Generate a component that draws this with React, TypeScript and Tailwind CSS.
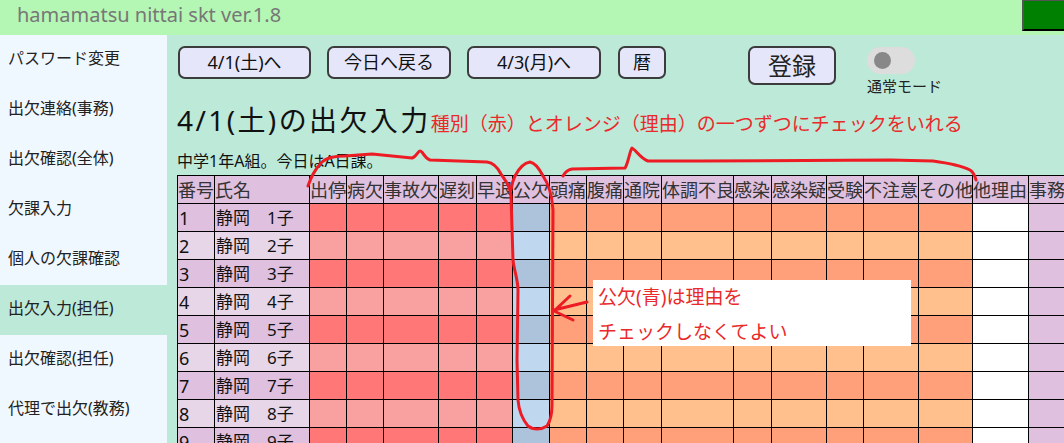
import React from "react";

type ColType = "id" | "red" | "blue" | "orange" | "white" | "jimu";

const cols: { name: string; w: number; type: ColType }[] = [
  { name: "番号", w: 37, type: "id" },
  { name: "氏名", w: 95, type: "id" },
  { name: "出停", w: 37, type: "red" },
  { name: "病欠", w: 37, type: "red" },
  { name: "事故欠", w: 55, type: "red" },
  { name: "遅刻", w: 38, type: "red" },
  { name: "早退", w: 36, type: "red" },
  { name: "公欠", w: 37, type: "blue" },
  { name: "頭痛", w: 37, type: "orange" },
  { name: "腹痛", w: 37, type: "orange" },
  { name: "通院", w: 38, type: "orange" },
  { name: "体調不良", w: 72, type: "orange" },
  { name: "感染", w: 38, type: "orange" },
  { name: "感染疑", w: 55, type: "orange" },
  { name: "受験", w: 37, type: "orange" },
  { name: "不注意", w: 55, type: "orange" },
  { name: "その他", w: 54, type: "orange" },
  { name: "他理由", w: 56, type: "white" },
  { name: "事務連絡", w: 80, type: "jimu" },
];

const bg: Record<ColType, [string, string]> = {
  id: ["bg-[#dfc0df]", "bg-[#e7d6e7]"],
  red: ["bg-[#ff7777]", "bg-[#f9a0a0]"],
  blue: ["bg-[#adc3dc]", "bg-[#c0d8ef]"],
  orange: ["bg-[#ffa07a]", "bg-[#ffc08e]"],
  white: ["bg-white", "bg-white"],
  jimu: ["bg-[#dfc0df]", "bg-[#dfc0df]"],
};

const menu = [
  "パスワード変更",
  "出欠連絡(事務)",
  "出欠確認(全体)",
  "欠課入力",
  "個人の欠課確認",
  "出欠入力(担任)",
  "出欠確認(担任)",
  "代理で出欠(教務)",
];

const btn =
  "h-[33px] rounded-[7px] border-2 border-[#3c3c3c] bg-[#e6e6fa] text-[18px] text-[#111] flex items-center justify-center";

export default function App() {
  const rows = Array.from({ length: 10 }, (_, i) => i + 1);
  return (
    <div className="relative w-[1064px] h-[443px] overflow-hidden flex flex-col [font-family:'Noto_Sans','Noto_Sans_CJK_JP',sans-serif] text-[#111]">
      {/* top bar */}
      <div className="h-[35px] shrink-0 bg-[#b4f6b4] flex items-start justify-between">
        <div className="pl-[17px] pt-[2px] text-[20px] leading-[26px] text-[#777]">
          hamamatsu nittai skt ver.1.8
        </div>
        <div className="w-[42px] h-[31px] bg-[#008000] border-l-2 border-t border-b-2 border-l-[#555] border-t-[#555] border-b-black" />
      </div>

      <div className="flex flex-1 min-h-0">
        {/* sidebar */}
        <div className="w-[167px] shrink-0 bg-[#f0f8ff] flex flex-col">
          {menu.map((m) => (
            <div
              key={m}
              className={
                "h-[50px] shrink-0 flex items-center pl-[8px] pb-[4px] text-[16px] text-[#222] " +
                (m === "出欠入力(担任)" ? "bg-[#bde9d9]" : "")
              }
            >
              {m}
            </div>
          ))}
        </div>

        {/* main */}
        <div className="flex-1 min-w-0 bg-[#bde9d9] overflow-hidden pl-[10px] pt-[11px]">
          <div className="h-[54px] flex items-start">
            <div className={btn + " w-[133px] ml-[1px]"}>4/1(土)へ</div>
            <div className={btn + " w-[124px] ml-[16px]"}>今日へ戻る</div>
            <div className={btn + " w-[134px] ml-[16px]"}>4/3(月)へ</div>
            <div className={btn + " w-[48px] ml-[17px] text-[17px]"}>暦</div>
            <div className="w-[88px] h-[39px] ml-[82px] rounded-[7px] border-2 border-[#3c3c3c] bg-[#e6e6fa] text-[24px] text-[#222] flex items-center justify-center">
              登録
            </div>
            <div className="ml-[31px] flex flex-col items-start pt-[1px]">
              <div className="w-[48px] h-[27px] rounded-full bg-[#dddddd] flex items-center pl-[7px]">
                <div className="w-[17px] h-[17px] rounded-full bg-[#888888]" />
              </div>
              <div className="text-[15px] leading-[20px] mt-[2px] text-[#222]">通常モード</div>
            </div>
          </div>

          <div className="h-[40px] leading-[40px] whitespace-nowrap">
            <span className="text-[28px] text-[#111] tracking-[2.4px]">4/1(土)の出欠入力</span>
            <span className="text-[19px] text-[#ea2a2a]">
              種別（赤）とオレンジ（理由）の一つずつにチェックをいれる
            </span>
          </div>
          <div className="mt-[11px] text-[16px] leading-[20px] text-[#111]">中学1年A組。今日はA日課。</div>

          <table className="mt-[4px] table-fixed border-collapse w-[931px] text-[18px]">
            <colgroup>
              {cols.map((c, i) => (
                <col key={i} style={{ width: c.w }} />
              ))}
            </colgroup>
            <thead>
              <tr className="h-[28px]">
                {cols.map((c, i) => (
                  <th
                    key={i}
                    className="border border-black bg-[#dfc0df] p-0 text-left font-normal text-[#333] whitespace-nowrap overflow-hidden leading-[26px]"
                  >
                    {c.name}
                  </th>
                ))}
              </tr>
            </thead>
            <tbody>
              {rows.map((r) => (
                <tr key={r} className="h-[28px]">
                  {cols.map((c, i) => (
                    <td
                      key={i}
                      className={
                        "border border-black p-0 whitespace-nowrap overflow-hidden leading-[26px] " +
                        bg[c.type][r % 2 === 1 ? 0 : 1]
                      }
                    >
                      {i === 0 ? (
                        <span className="pl-[1px]">{r}</span>
                      ) : i === 1 ? (
                        <span className="text-[17px] pl-[1px]">静岡　{r}子</span>
                      ) : null}
                    </td>
                  ))}
                </tr>
              ))}
            </tbody>
          </table>
        </div>
      </div>

      {/* annotation box */}
      <div className="absolute left-[593px] top-[280px] w-[318px] h-[66px] bg-white pl-[5px] text-[19px] leading-[35px] text-[#ea2a2a]">
        <div>公欠(青)は理由を</div>
        <div>チェックしなくてよい</div>
      </div>

      {/* hand-drawn red marks */}
      <svg
        className="absolute left-0 top-0 pointer-events-none"
        width={1064}
        height={443}
        viewBox="0 0 1064 443"
        fill="none"
        stroke="#ed1c24"
        strokeWidth={3}
        strokeLinecap="round"
        strokeLinejoin="round"
      >
        <path d="M 308 186 C 311 178, 314 170, 322 162 C 326 158, 332 156, 345 156 L 372 154 L 412 158 C 416 157, 418 151, 420 151 C 423 151, 424 158, 430 160 L 487 162 C 494 163, 498 168, 501 174 C 505 180, 510 185, 511 195 L 513 260 C 514 270, 518 280, 518 290 L 517 360 L 518 400 C 519 412, 523 420, 528 426 C 533 430, 541 430, 547 426 C 551 420, 552 412, 552 405 L 553 210 C 552 195, 548 183, 543 176 C 540 170, 536 163, 530 162 C 524 163, 519 168, 515 176 C 513 180, 512 184, 511 190" />
        <path d="M 563 176 C 565 172, 567 170, 572 169 L 625 168 C 628 164, 630 150, 632 148 C 636 150, 640 158, 648 161 L 700 161 L 890 160 L 933 161 C 948 163, 962 166, 970 170 C 973 172, 975 176, 976 180" />
        <path d="M 570 296 L 554 311 L 573 320 M 554 310 L 587 302" />
      </svg>
    </div>
  );
}
